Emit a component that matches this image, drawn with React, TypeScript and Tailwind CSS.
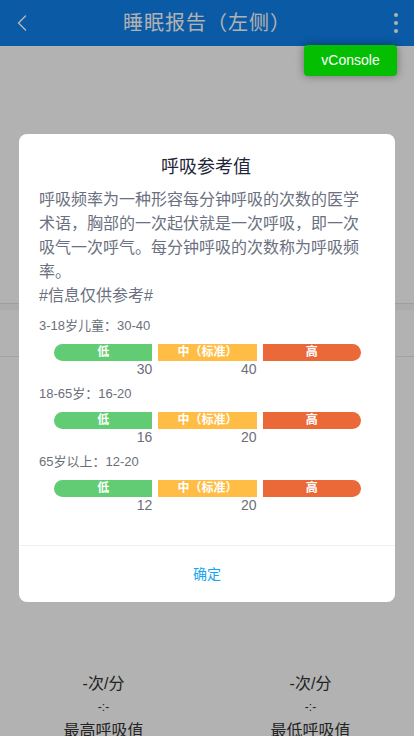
import { ChevronLeft } from 'lucide-react';

type Range = {
  label: string;
  low: string;
  high: string;
};

const ranges: Range[] = [
  { label: '3-18岁儿童：30-40', low: '30', high: '40' },
  { label: '18-65岁：16-20', low: '16', high: '20' },
  { label: '65岁以上：12-20', low: '12', high: '20' },
];

const font = { fontFamily: '"Liberation Sans", "Noto Sans CJK SC", sans-serif' };

const RangeRow = ({ item }: { item: Range }) => (
  <div className="mb-[8px]">
    <div className="text-[13px] leading-[18px] text-[#6b6f7a]">{item.label}</div>
    <div className="ml-[15px] mr-[12px] mt-[9px]">
      <div className="grid grid-cols-3 gap-[6px] text-[12px] font-semibold leading-[17px] text-white">
        <div className="h-[17px] rounded-l-full bg-[#62cc74] text-center">低</div>
        <div className="h-[17px] bg-[#ffbd45] text-center">中（标准）</div>
        <div className="h-[17px] rounded-r-full bg-[#eb6838] text-center">高</div>
      </div>
      <div className="grid grid-cols-3 gap-[6px] text-[14px] leading-[16px] text-[#6b6f7a]">
        <div className="text-right">{item.low}</div>
        <div className="text-right">{item.high}</div>
        <div />
      </div>
    </div>
  </div>
);

const Stat = ({ title }: { title: string }) => (
  <div className="flex flex-col items-center text-[#333]">
    <div className="text-[16px] leading-[24px]">-次/分</div>
    <div className="text-[12px] leading-[22px]">-:-</div>
    <div className="text-[16px] leading-[26px]">{title}</div>
  </div>
);

export default function App() {
  return (
    <div className="relative h-[736px] w-[414px] overflow-hidden bg-white" style={font}>
      {/* page underneath */}
      <header className="flex h-[46px] items-center justify-between bg-[#1081ec] pl-[8px] pr-[10px] text-white">
        <ChevronLeft className="h-[28px] w-[28px]" strokeWidth={1.3} />
        <div className="text-[20px] tracking-[1px]">睡眠报告（左侧）</div>
        <div className="flex w-[26px] flex-col items-center gap-[4px] pl-[10px]">
          <span className="h-[4px] w-[4px] rounded-full bg-white" />
          <span className="h-[4px] w-[4px] rounded-full bg-white" />
          <span className="h-[4px] w-[4px] rounded-full bg-white" />
        </div>
      </header>
      <div className="h-[257px]" />
      <div className="h-[7px] border-t border-[#e3e3e3] bg-[#f6f6f6]" />
      <div className="h-[47px] border-b border-[#e8e8e8]" />
      <div className="h-[315px]" />
      <div className="grid grid-cols-2">
        <Stat title="最高呼吸值" />
        <Stat title="最低呼吸值" />
      </div>

      {/* mask */}
      <div className="absolute inset-0 bg-black/30" />

      {/* vConsole */}
      <div className="absolute right-[17px] top-[45px] flex h-[31px] w-[93px] items-center justify-center rounded-[4px] bg-[#04be02] text-[14px] text-white shadow-[0_0_8px_rgba(0,0,0,0.4)]">
        vConsole
      </div>

      {/* dialog */}
      <div className="absolute left-[19px] top-[134px] w-[376px] rounded-[8px] bg-white">
        <div className="pl-[20px] pr-[22px] pt-[20px]">
          <div className="text-center text-[18px] leading-[26px] text-[#1e2638]">呼吸参考值</div>
          <p className="mt-[8px] text-[16px] leading-[24px] text-[#6b7080]">
            呼吸频率为一种形容每分钟呼吸的次数的医学术语，胸部的一次起伏就是一次呼吸，即一次吸气一次呼气。每分钟呼吸的次数称为呼吸频率。
            <br />
            #信息仅供参考#
          </p>
          <div className="mt-[9px] pb-[24px]">
            {ranges.map((r) => (
              <RangeRow key={r.label} item={r} />
            ))}
          </div>
        </div>
        <div className="flex h-[57px] items-center justify-center border-t border-[#f0f0f0] text-[14px] text-[#14a6f0]">
          确定
        </div>
      </div>
    </div>
  );
}
